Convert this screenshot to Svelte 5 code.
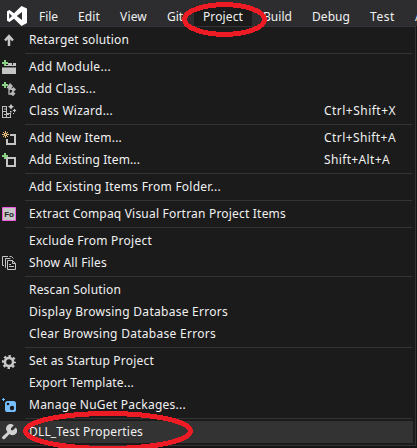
<script>
  const tabs = [
    { label: 'File', width: 19 }, { label: 'Edit', width: 22 },
    { label: 'View', width: 27 }, { label: 'Git', width: 16 },
    { label: 'Project', width: 40, open: true }, { label: 'Build', width: 29 },
    { label: 'Debug', width: 38 }, { label: 'Test', width: 25 },
    { label: 'Analyze', width: 42 }
  ];
  const groups = [
    [{ label: 'Retarget solution', width: 100, icon: 'up' }],
    [
      { label: 'Add Module...', width: 82, icon: 'module' },
      { label: 'Add Class...', width: 67, icon: 'class' },
      { label: 'Class Wizard...', width: 84, icon: 'wizard', keys: 'Ctrl+Shift+X', keysWidth: 72 }
    ],
    [
      { label: 'Add New Item...', width: 93, icon: 'new', keys: 'Ctrl+Shift+A', keysWidth: 72 },
      { label: 'Add Existing Item...', width: 111, icon: 'existing', keys: 'Shift+Alt+A', keysWidth: 66 }
    ],
    [{ label: 'Add Existing Items From Folder...', width: 192 }],
    [{ label: 'Extract Compaq Visual Fortran Project Items', width: 257, icon: 'fortran' }],
    [
      { label: 'Exclude From Project', width: 123 },
      { label: 'Show All Files', width: 78, icon: 'files' }
    ],
    [
      { label: 'Rescan Solution', width: 92 },
      { label: 'Display Browsing Database Errors', width: 199 },
      { label: 'Clear Browsing Database Errors', width: 187 }
    ],
    [
      { label: 'Set as Startup Project', width: 125, icon: 'gear' },
      { label: 'Export Template...', width: 105 },
      { label: 'Manage NuGet Packages...', width: 157, icon: 'nuget' }
    ],
    [{ label: 'DLL_Test Properties', width: 114, icon: 'wrench', active: true }]
  ];

  // Spreads a label's letters so that it fills its column width.
  function fit(node, width) {
    const natural = node.getBoundingClientRect().width;
    node.style.letterSpacing = (width - natural) / node.textContent.length + 'px';
  }
</script>

{#snippet plus()}
  <path d="M3 1h2v2h2v2H5v2H3V5H1V3h2z" fill="#89d185" />
{/snippet}

{#snippet icon(name)}
  <svg class="icon" width="16" height="16" viewBox="0 0 16 16">
    {#if name === 'up'}
      <path d="M8 14V4M4 8.500L8 4.200l4 4.300" fill="none" stroke="#c8c8c8" stroke-width="2.500" />
    {:else if name === 'module'}
      <path d="M7 4h4v3H7zM12 4h3v3h-3zM5 6h10v1H5zM1 9h14v6H1z" fill="#c4c4c4" />
      <path d="M1 8h14v1H1z" fill="#777" />
      {@render plus()}
    {:else if name === 'class'}
      <path d="M6 7l4-3M8 6v7h3M8 8h4" fill="none" stroke="#b8b8b8" stroke-width="1.300" />
      <path d="M6 6l3-4 3 3-3 4zM10 8.500L12.500 6 15 8.500 12.500 11zM9 12.500l2.500-2.500 3 2.500-2.500 2.700z" fill="#b8b8b8" />
      {@render plus()}
    {:else if name === 'wizard'}
      <path d="M1.500 3v12M1 3.500h5M5.500 3v12M1 8.500h5M1 14.500h9M9.500 10v5M6 10.500h4M3 6h2M3 11.500h5" fill="none" stroke="#bdbdbd" />
      <path d="M10 .8l1 2 2 1-2 1-1 2-1-2-2-1 2-1zM13.500 5.500l.7 1.300 1.300.7-1.300.7-.7 1.300-.7-1.300-1.300-.7 1.300-.7zM9 8h1.500v1.500H9zM12 10h1v1h-1z" fill="#d0d0d0" />
    {:else if name === 'new'}
      <path d="M9 5h5v9H6V9" fill="none" stroke="#c4c4c4" stroke-width="2" />
      <path d="M4.500 1v7M1 4.500h7M2 2l5 5M7 2L2 7" stroke="#e8bd7b" />
      <path d="M4 4h1v1H4z" fill="#1b1b1c" />
    {:else if name === 'existing'}
      <path d="M6 6h8v8H6z" fill="none" stroke="#c4c4c4" stroke-width="2" />
      {@render plus()}
    {:else if name === 'fortran'}
      <path d="M1.500 1.500h13v13h-13z" fill="#c6c6c6" stroke="#ee5adb" />
      <text x="3.200" y="11">Fo</text>
    {:else if name === 'files'}
      <path d="M3 10.500H1.500v-9h5.500M5 12.500H4.500v-9h5M6.500 5.500h5l3 3v6h-8zM11.500 5.500v3h3M8 9.500h2M8 11.500h5M8.500 1.500h2l2 2" fill="none" stroke="#c4c4c4" />
    {:else if name === 'gear'}
      <g fill="none" stroke="#c8c8c8">
        <circle cx="8" cy="9" r="4.100" stroke-width="2.600" />
        <circle cx="8" cy="9" r="6" stroke-width="2.200" stroke-dasharray="2.400 2.312" stroke-dashoffset="1.200" />
      </g>
    {:else if name === 'nuget'}
      <rect x="4" y="4" width="11" height="11" rx="2.600" fill="#75beff" />
      <path d="M2.500 1v3M1 2.500h3" stroke="#75beff" />
      <circle cx="7" cy="7" r="1.300" fill="#1b1b1c" />
      <circle cx="11" cy="11" r="2.200" fill="#1b1b1c" />
    {:else if name === 'wrench'}
      <path d="M1.500 12.500l5-4.500A4.500 4.500 0 0 1 12.800 1.200L10 4.200v2h2l2.800-2.800A4.500 4.500 0 0 1 8.500 10l-4.300 4.600a1.700 1.700 0 0 1-2.700-2.100z" fill="#d2d2d2" />
    {/if}
  </svg>
{/snippet}

<div class="window">
  <header>
    <svg class="logo" width="20" height="20" viewBox="0 0 20 20">
      <path fill="#fff" fill-rule="evenodd" d="M14.500 0L20 2.500v14.500L14.500 20 7 12.800 2.500 16 0 14.800V5.200L2.500 4 7 7.200zM15 6L9.800 10l5.200 4zM2.200 7.300v5.400L5 10z" />
    </svg>
    <nav>
      {#each tabs as tab}
        <span class="tab" class:open={tab.open} style:width="{tab.width}px"><span use:fit={tab.width}>{tab.label}</span></span>
      {/each}
    </nav>
  </header>
  <main>
    {#each groups as group}
      <section>
        {#each group as item}
          <div class="row" class:active={item.active}>
            <span class="gutter">{#if item.icon}{@render icon(item.icon)}{/if}</span>
            <span use:fit={item.width}>{item.label}</span>
            {#if item.keys}<span class="keys"><span use:fit={item.keysWidth}>{item.keys}</span></span>{/if}
          </div>
        {/each}
      </section>
    {/each}
  </main>
  <svg class="marks" width="417" height="448" viewBox="0 0 417 448" shape-rendering="crispEdges">
    <ellipse cx="224.500" cy="19.500" rx="40" ry="14.800" />
    <ellipse cx="108" cy="431" rx="82.500" ry="17.500" />
  </svg>
</div>

<style>
  .window {
    position: relative;
    box-sizing: border-box;
    width: 417px;
    height: 448px;
    overflow: hidden;
    background: #141415;
    color: #f1f1f1;
    font: 12px/22px "Noto Sans", "Open Sans", sans-serif;
  }
  header {
    display: flex;
    height: 26px;
    background: #2d2d30;
  }
  .logo { flex: none; margin: 6px 2px 0 7px; }
  nav { display: flex; padding-top: 6px; }
  .tab { flex: none; padding: 0 10px; height: 20px; white-space: nowrap; }
  .tab.open { margin: 0 1px; padding: 0 9px; background: #1b1b1c; }
  main {
    box-sizing: border-box;
    width: 416px;
    height: 420px;
    padding-top: 2px;
    border: solid #333337;
    border-width: 1px 1px 1px 0;
    background: #1b1b1c;
  }
  section + section::before {
    content: "";
    display: block;
    height: 1px;
    margin: 0 3px 0 25px;
    border: solid #1b1b1c;
    border-width: 2px 0;
    background: #333337;
  }
  .row {
    display: flex;
    position: relative;
    height: 22px;
    width: 413px;
    white-space: nowrap;
  }
  .active { background: #333334; }
  .gutter { flex: none; width: 29px; }
  .icon { display: block; margin: 3px 0 0 1px; }
  .icon text { fill: #222; font: bold 8px "Liberation Sans", sans-serif; }
  .keys { position: absolute; left: 324px; }
  .marks {
    position: absolute;
    inset: 0;
    fill: none;
    stroke: #ed1c24;
    stroke-width: 5px;
    pointer-events: none;
  }
</style>
